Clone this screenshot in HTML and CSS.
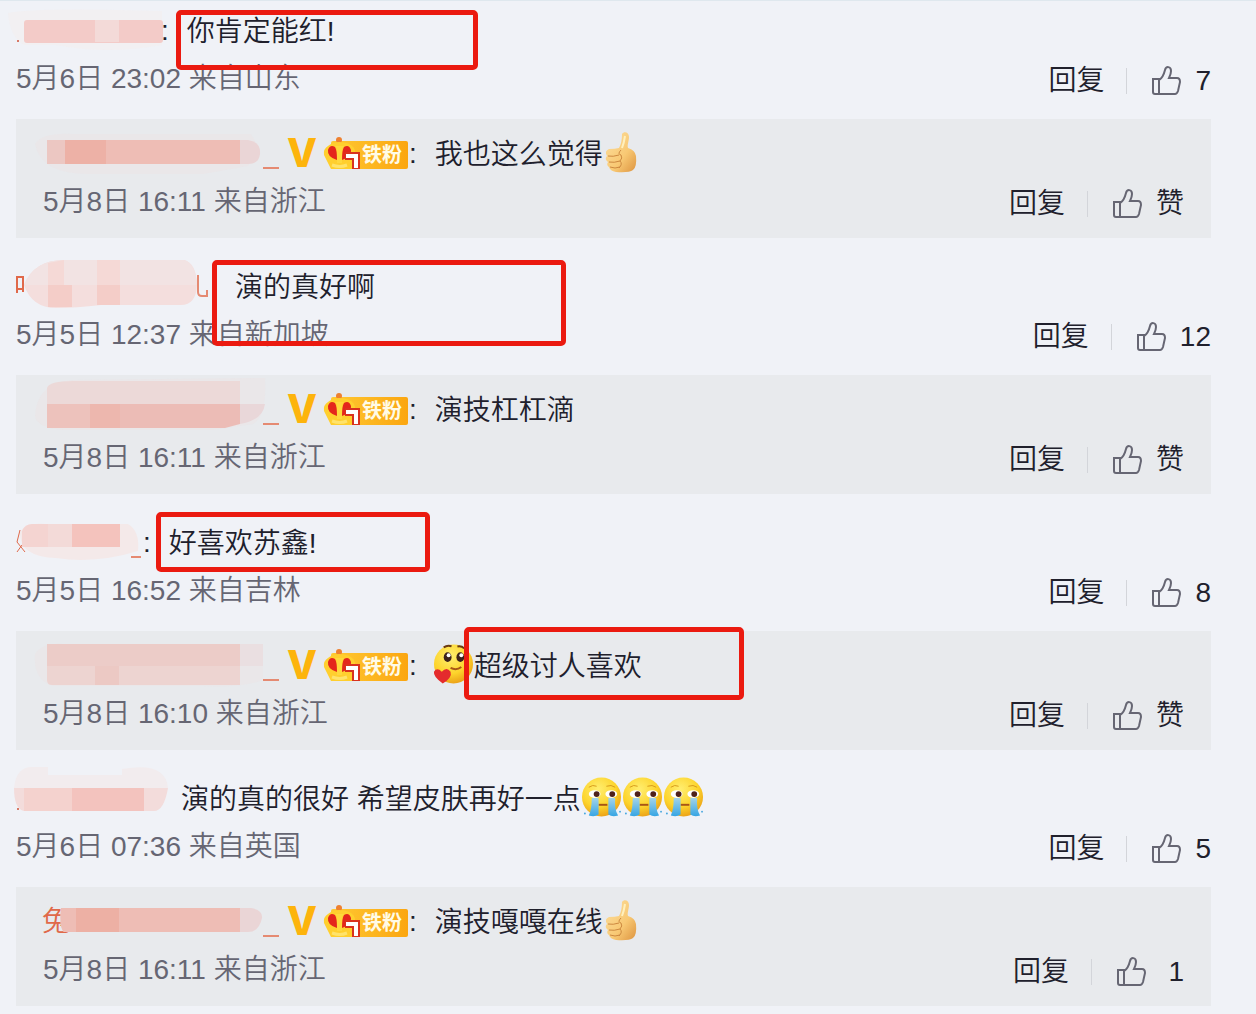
FILE: index.html
```html
<!DOCTYPE html>
<html lang="zh-CN">
  <head>
    <meta charset="UTF-8" />
    <meta name="viewport" content="width=device-width, initial-scale=1.0" />
    <title>评论</title>
    <link rel="stylesheet" href="styles.css" />
  </head>
  <body>
    <!-- shared icons -->
    <svg class="sprite" aria-hidden="true">
      <defs>
        <linearGradient id="skin" x1="0" y1="0" x2="1" y2="1">
          <stop offset="0" stop-color="#fde0a0" />
          <stop offset="0.6" stop-color="#f8c873" />
          <stop offset="1" stop-color="#dd9440" />
        </linearGradient>
        <radialGradient id="face" cx="0.42" cy="0.3" r="0.75">
          <stop offset="0" stop-color="#ffee70" />
          <stop offset="0.6" stop-color="#fdd42c" />
          <stop offset="1" stop-color="#e99a14" />
        </radialGradient>
        <linearGradient id="tear" x1="0" y1="0" x2="0" y2="1">
          <stop offset="0" stop-color="#a3d3e8" />
          <stop offset="1" stop-color="#35a5e4" />
        </linearGradient>
        <linearGradient id="gold" x1="0" y1="0" x2="1" y2="0">
          <stop offset="0" stop-color="#ffc933" />
          <stop offset="1" stop-color="#fba610" />
        </linearGradient>
      </defs>
      <symbol id="icon-like" viewBox="0 0 30 30">
        <path d="M2 13H8V28H4Q2 28 2 26ZM8 14C12 12 13 8 14 4C15 0 20 0 20 5C20 8 19 10 18 12H26C28 12 29 13 29 16L27 25Q26 28 24 28H8" />
      </symbol>
      <symbol id="icon-badge" viewBox="0 0 86 34">
        <rect x="8" y="4" width="77" height="28" rx="2" fill="url(#gold)" />
        <circle cx="16" cy="3" r="3" fill="#ee8130" />
        <path d="M8 32Q5 26 1 18Q0 12 5 9Q10 5 16 5Q27 5 31 11Q34 16 30 32Z" fill="#ffcf2e" />
        <path d="M14 23Q4 20 5 13Q7 7 12 10Q14 13 14 23ZM19 23Q29 20 28 13Q26 7 21 10Q19 13 19 23Z" fill="#e4261c" />
        <path d="M12 9H21L19 12V26H14V12Z" fill="#ffd83c" />
        <path d="M9 28Q17 31 24 28" fill="none" stroke="#ffe36b" stroke-width="3" />
        <path d="M22 19H33V32" fill="none" stroke="#d9321e" stroke-width="8" />
        <path d="M23 19H33V31" fill="none" stroke="#fff" stroke-width="4" />
      </symbol>
      <symbol id="icon-thumb" viewBox="0 0 34 42">
        <path d="M18 3C20 0 25 1 25 6C25 10 23 14 24 17Q31 19 32 25Q33 36 29 39Q25 42 12 41Q6 40 5 36Q2 34 4 31Q0 28 3 25Q0 20 5 18Q11 18 15 17Q18 12 18 3Z" fill="url(#skin)" />
        <path d="M4 25Q9 26 15 24M5 31Q10 32 16 30M6 36Q11 38 16 36M17 19Q13 23 17 24Q19 27 16 30Q19 33 15 37" fill="none" stroke="#cd8940" stroke-width="1" />
        <path d="M21 5Q20 12 18 17" fill="none" stroke="#fff0bd" stroke-width="2" />
      </symbol>
      <symbol id="icon-cry" viewBox="0 0 42 42">
        <circle cx="21" cy="21" r="20" fill="url(#face)" />
        <path d="M8 11Q12 8 16 10M26 10Q31 8 35 11" fill="none" stroke="#d69a1c" stroke-width="1" />
        <ellipse cx="14" cy="18" rx="6" ry="4" fill="#fff" />
        <ellipse cx="31" cy="18" rx="6" ry="4" fill="#fff" />
        <circle cx="16" cy="18" r="3" fill="#4e211b" />
        <circle cx="32" cy="18" r="3" fill="#4e211b" />
        <path d="M18 29H27" fill="none" stroke="#a85616" stroke-width="2" />
        <path d="M11 22H18V39Q14 42 8 40Q11 34 11 22ZM28 22H35Q34 34 38 40Q32 42 28 39Z" fill="url(#tear)" />
        <circle cx="4" cy="38" r="1" fill="#4ba9df" />
        <circle cx="40" cy="36" r="1" fill="#4ba9df" />
      </symbol>
      <symbol id="icon-heart" viewBox="0 0 42 42">
        <circle cx="21" cy="21" r="20" fill="url(#face)" />
        <path d="M11 4Q15 1 19 3M25 3Q29 2 32 5" fill="none" stroke="#6b3a12" stroke-width="2" />
        <ellipse cx="15" cy="14" rx="4" ry="5" fill="#3d211b" />
        <ellipse cx="28" cy="14" rx="4" ry="5" fill="#3d211b" />
        <circle cx="16" cy="12" r="2" fill="#fff" />
        <circle cx="29" cy="12" r="2" fill="#fff" />
        <path d="M18 25Q24 28 29 24" fill="none" stroke="#a85616" stroke-width="2" />
        <path d="M10 41Q0 34 1 29Q4 24 9 29Q14 23 18 29Q20 35 10 41Z" fill="#e42b2d" />
      </symbol>
    </svg>

    <main class="comments">
      <article class="comment">
        <div class="line">
          <svg class="name" width="145" height="48" aria-label="用户">
            <path d="M-8 6Q20 0 146 4V38Q90 48 40 38H8Q-6 30 -8 6Z" fill="#f3eeef" opacity="0.6" />
            <rect x="1" y="33" width="2" height="2" fill="#d87a68" />
            <rect x="8" y="13" width="139" height="23" rx="3" fill="#f3cbc8" />
            <path d="M79 13H103V35H79Z" fill="#f3dad8" />
          </svg>
          <span class="colon">:</span>
          <p class="text">你肯定能红!</p>
          <span class="mark mark-1"></span>
        </div>
        <div class="line meta">
          <time>5月6日 23:02 来自山东</time>
          <div class="actions">
            <button>回复</button>
            <button class="like"><svg class="like-icon"><use href="#icon-like" /></svg><span class="count">7</span></button>
          </div>
        </div>
        <div class="reply">
          <div class="line">
            <svg class="name" width="236" height="48" aria-label="用户">
              <path d="M-8 14Q0 2 30 4H208Q220 20 205 36L160 44H45Q-2 44 -8 14Z" fill="#ebe4e6" opacity="0.6" />
              <path d="M4 10H205Q218 12 217 24Q216 34 205 34H4Z" fill="#ead5d6" />
              <path d="M4 10H197V34H4Z" fill="#eebdb5" />
              <path d="M4 10H22V34H4Z" fill="#ecc7c2" />
              <path d="M22 10H63V34H22Z" fill="#edb1a6" />
              <path d="M220 38H236" stroke="#e58a72" stroke-width="2" />
            </svg>
            <span class="vip">V</span>
            <span class="badge"><svg class="badge-icon"><use href="#icon-badge" /></svg><b class="badge-text">铁粉</b></span>
            <span class="colon">:</span>
            <p class="text">我也这么觉得</p>
            <svg class="thumb"><use href="#icon-thumb" /></svg>
          </div>
          <div class="line meta">
            <time>5月8日 16:11 来自浙江</time>
            <div class="actions">
              <button>回复</button>
              <button class="like"><svg class="like-icon"><use href="#icon-like" /></svg><span class="count">赞</span></button>
            </div>
          </div>
        </div>
      </article>

      <article class="comment">
        <div class="line">
          <svg class="name" width="203" height="48" aria-label="用户">
            <path d="M8 22Q18 -3 48 -3H168Q180 0 181 22Q180 42 165 42H85Q60 45 40 45Q16 45 8 22Z" fill="#f4dedd" />
            <path d="M8 22Q18 -3 48 -3H168Q180 0 181 22Z" fill="#f2e3e3" />
            <path d="M32 0L48 -3V22H32ZM81 -3H104V22H81Z" fill="#f5d9d6" />
            <path d="M32 22H56V44H32ZM81 22H104V42H81Z" fill="#f4cdc8" />
            <path d="M1 30V14H7V29M1 26H7" fill="none" stroke="#e0694a" stroke-width="2" />
            <path d="M182 12V29Q182 33 186 33H191V27" fill="none" stroke="#e58a72" stroke-width="2" />
          </svg>
          <p class="text">演的真好啊</p>
          <span class="mark mark-2"></span>
        </div>
        <div class="line meta">
          <time>5月5日 12:37 来自新加坡</time>
          <div class="actions">
            <button>回复</button>
            <button class="like"><svg class="like-icon"><use href="#icon-like" /></svg><span class="count">12</span></button>
          </div>
        </div>
        <div class="reply">
          <div class="line">
            <svg class="name" width="236" height="48" aria-label="用户">
              <path d="M-8 30Q-6 -4 30 -6L222 -8Q224 30 210 38L170 44H20Q-6 42 -8 30Z" fill="#ebe4e6" opacity="0.6" />
              <path d="M4 18V2Q6 -5 30 -5H197V18Z" fill="#ecd9d8" />
              <path d="M197 18H222Q220 34 197 38Z" fill="#e9d7d9" />
              <path d="M4 18H197V38L182 42H4Z" fill="#ecbcb6" />
              <path d="M4 18H47V42H4Z" fill="#edc2bc" />
              <path d="M47 18H77V42H47Z" fill="#edb7ae" />
              <path d="M220 38H236" stroke="#e58a72" stroke-width="2" />
            </svg>
            <span class="vip">V</span>
            <span class="badge"><svg class="badge-icon"><use href="#icon-badge" /></svg><b class="badge-text">铁粉</b></span>
            <span class="colon">:</span>
            <p class="text">演技杠杠滴</p>
          </div>
          <div class="line meta">
            <time>5月8日 16:11 来自浙江</time>
            <div class="actions">
              <button>回复</button>
              <button class="like"><svg class="like-icon"><use href="#icon-like" /></svg><span class="count">赞</span></button>
            </div>
          </div>
        </div>
      </article>

      <article class="comment">
        <div class="line">
          <svg class="name" width="127" height="48" aria-label="用户">
            <path d="M4 11L1 23L9 33M6 26L1 33" fill="none" stroke="#e0694a" stroke-width="1" />
            <path d="M4 14Q8 3 30 5H112Q124 12 122 32Q80 45 40 39Q4 38 4 14Z" fill="#f4e9e9" />
            <path d="M6 12Q9 5 16 5H104V28H6Z" fill="#f4d4d1" />
            <path d="M32 5H56V28H32Z" fill="#f3dad8" />
            <path d="M56 5H104V28H56Z" fill="#f4c3bd" />
            <path d="M115 38H125" stroke="#e58a72" stroke-width="2" />
          </svg>
          <span class="colon">:</span>
          <p class="text">好喜欢苏鑫!</p>
          <span class="mark mark-3"></span>
        </div>
        <div class="line meta">
          <time>5月5日 16:52 来自吉林</time>
          <div class="actions">
            <button>回复</button>
            <button class="like"><svg class="like-icon"><use href="#icon-like" /></svg><span class="count">8</span></button>
          </div>
        </div>
        <div class="reply">
          <div class="line">
            <svg class="name" width="236" height="48" aria-label="用户">
              <path d="M-8 12Q0 0 20 2H220V38Q200 46 160 44H10Q-10 38 -8 12Z" fill="#ebe4e6" opacity="0.6" />
              <path d="M4 2H197V43H9Q4 43 4 38Z" fill="#edd4d1" />
              <path d="M4 2H197V24H4Z" fill="#ecccc8" />
              <path d="M52 24H76V43H52Z" fill="#ecc9c4" />
              <path d="M197 2H220V24H197Z" fill="#eadfe1" />
              <path d="M220 38H236" stroke="#e58a72" stroke-width="2" />
            </svg>
            <span class="vip">V</span>
            <span class="badge"><svg class="badge-icon"><use href="#icon-badge" /></svg><b class="badge-text">铁粉</b></span>
            <span class="colon">:</span>
            <svg class="face"><use href="#icon-heart" /></svg>
            <p class="text">超级讨人喜欢</p>
            <span class="mark mark-4"></span>
          </div>
          <div class="line meta">
            <time>5月8日 16:10 来自浙江</time>
            <div class="actions">
              <button>回复</button>
              <button class="like"><svg class="like-icon"><use href="#icon-like" /></svg><span class="count">赞</span></button>
            </div>
          </div>
        </div>
      </article>

      <article class="comment">
        <div class="line">
          <svg class="name" width="149" height="48" aria-label="用户">
            <path d="M-2 13Q0 -8 16 -8H32V0H106V-6Q150 -14 152 13Z" fill="#f2ecee" />
            <path d="M-2 13H152Q148 36 138 36H8Q-2 34 -2 13Z" fill="#f3dcdb" />
            <path d="M8 13H56V36H8Z" fill="#f4d2ce" />
            <path d="M56 13H128V36H56Z" fill="#f3c3be" />
            <rect x="1" y="33" width="2" height="2" fill="#d87a68" />
          </svg>
          <p class="text">演的真的很好 希望皮肤再好一点</p>
          <svg class="face"><use href="#icon-cry" /></svg>
          <svg class="face"><use href="#icon-cry" /></svg>
          <svg class="face"><use href="#icon-cry" /></svg>
        </div>
        <div class="line meta">
          <time>5月6日 07:36 来自英国</time>
          <div class="actions">
            <button>回复</button>
            <button class="like"><svg class="like-icon"><use href="#icon-like" /></svg><span class="count">5</span></button>
          </div>
        </div>
        <div class="reply">
          <div class="line">
            <svg class="name" width="236" height="48" aria-label="用户">
              <text x="-1" y="33" class="name-text">兔</text>
              <path d="M18 10H208Q220 12 219 20Q216 34 205 34H21Q16 30 18 10Z" fill="#ead5d6" />
              <path d="M18 10H197V34H21Q16 30 18 10Z" fill="#eebdb5" />
              <path d="M33 10H76V34H33Z" fill="#edb0a4" />
              <path d="M220 38H236" stroke="#e58a72" stroke-width="2" />
            </svg>
            <span class="vip">V</span>
            <span class="badge"><svg class="badge-icon"><use href="#icon-badge" /></svg><b class="badge-text">铁粉</b></span>
            <span class="colon">:</span>
            <p class="text">演技嘎嘎在线</p>
            <svg class="thumb"><use href="#icon-thumb" /></svg>
          </div>
          <div class="line meta">
            <time>5月8日 16:11 来自浙江</time>
            <div class="actions">
              <button>回复</button>
              <button class="like"><svg class="like-icon"><use href="#icon-like" /></svg><span class="count">1</span></button>
            </div>
          </div>
        </div>
      </article>
    </main>
  </body>
</html>
```

FILE: styles.css
```css
* {
  box-sizing: border-box;
}

body {
  margin: 0;
  background-color: #f0f2f7;
  border-top: 1px solid #dfe8ee;
  color: #20202c;
  font-family: "Liberation Sans", "Noto Sans CJK SC", sans-serif;
  font-size: 28px;
  font-weight: 350;
  line-height: 48px;
}

.sprite {
  position: absolute;
  width: 0;
  height: 0;
}

.comments {
  display: flex;
  flex-direction: column;
  gap: 25px;
  padding: 6px 45px 8px 16px;
}

.line {
  position: relative;
  display: flex;
  align-items: center;
  height: 48px;
  white-space: nowrap;
}

.name {
  flex: none;
  overflow: visible;
}

.name-text {
  fill: #e0694a;
}

.text {
  margin: 0 0 0 16px;
  padding-top: 2px;
}

.colon + .text {
  margin-left: 18px;
}

.face + .text {
  margin-left: 0;
}

.colon + .face {
  margin-left: 16px;
}

.vip {
  width: 30px;
  margin: 0 6px 2px 8px;
  color: #fdb40c;
  font-family: Inter, sans-serif;
  font-size: 39px;
  font-weight: 800;
}

.badge {
  position: relative;
  flex: none;
  width: 86px;
  height: 34px;
  padding-left: 39px;
  line-height: 36px;
}

.badge-icon {
  position: absolute;
  top: 0;
  left: 0;
  width: 86px;
  height: 34px;
}

.badge-text {
  position: relative;
  display: block;
  color: #fffbe6;
  font-size: 20px;
}

.thumb {
  flex: none;
  width: 34px;
  height: 42px;
  margin: 0 0 4px 1px;
}

.face {
  flex: none;
  width: 41px;
  height: 42px;
  margin-bottom: 4px;
}

.meta {
  justify-content: space-between;
  color: #666673;
}

.actions {
  display: flex;
  align-items: center;
  padding-top: 4px;
}

button {
  padding: 0;
  border: none;
  background: none;
  color: #20202c;
  font: inherit;
  cursor: pointer;
}

.like {
  display: flex;
  align-items: center;
  gap: 14px;
}

.like::before {
  content: "";
  width: 1px;
  height: 26px;
  margin: 0 10px 0 22px;
  background-color: #d3d5da;
}

.like-icon {
  width: 30px;
  height: 30px;
  fill: none;
  stroke: #666673;
  stroke-width: 2;
}

.reply {
  margin-top: 16px;
  padding: 11px 27px 12px;
  background-color: #e8eaed;
}

.reply .count {
  min-width: 24px;
  text-align: right;
}

/* red highlight frames over the comments */
.mark {
  position: absolute;
  z-index: 1;
  border: 5px solid #eb1a10;
  border-radius: 5px;
}

.mark-1 {
  top: 3px;
  left: 160px;
  width: 302px;
  height: 60px;
}

.mark-2 {
  top: -3px;
  left: 196px;
  width: 354px;
  height: 86px;
}

.mark-3 {
  top: -7px;
  left: 140px;
  width: 274px;
  height: 60px;
}

.mark-4 {
  top: -15px;
  left: 421px;
  width: 280px;
  height: 73px;
}
```
